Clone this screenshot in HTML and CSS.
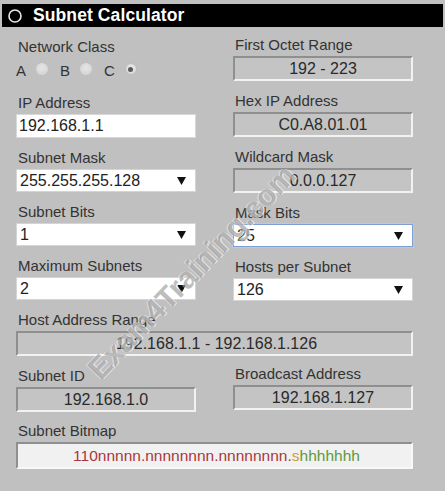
FILE: index.html
```html
<!DOCTYPE html>
<html>
<head>
<meta charset="utf-8">
<link rel="stylesheet" href="styles.css">
</head>
<body>
<div class="app">
  <header class="titlebar">
    <svg class="ring" width="16" height="16" viewBox="0 0 16 16"><circle cx="8" cy="8" r="6" fill="none" stroke="#e8e8e8" stroke-width="1.6"/></svg>
    <h1>Subnet Calculator</h1>
  </header>

  <div class="cols top">
    <div class="col left">
      <div class="field">
        <div class="label">Network Class</div>
        <div class="radios">
          <span class="rlabel">A</span><span class="radio"></span>
          <span class="rlabel">B</span><span class="radio"></span>
          <span class="rlabel">C</span><span class="radio checked"></span>
        </div>
      </div>
      <div class="field ip">
        <div class="label">IP Address</div>
        <div class="input">192.168.1.1</div>
      </div>
      <div class="field">
        <div class="label">Subnet Mask</div>
        <div class="select"><span>255.255.255.128</span><svg width="9" height="8" viewBox="0 0 9 8"><path d="M0 0H9L4.5 8Z" fill="#111"/></svg></div>
      </div>
      <div class="field">
        <div class="label">Subnet Bits</div>
        <div class="select"><span>1</span><svg width="9" height="8" viewBox="0 0 9 8"><path d="M0 0H9L4.5 8Z" fill="#111"/></svg></div>
      </div>
      <div class="field">
        <div class="label">Maximum Subnets</div>
        <div class="select"><span>2</span><svg width="9" height="8" viewBox="0 0 9 8"><path d="M0 0H9L4.5 8Z" fill="#111"/></svg></div>
      </div>
    </div>

    <div class="col right">
      <div class="field">
        <div class="label">First Octet Range</div>
        <div class="out">192 - 223</div>
      </div>
      <div class="field">
        <div class="label">Hex IP Address</div>
        <div class="out">C0.A8.01.01</div>
      </div>
      <div class="field">
        <div class="label">Wildcard Mask</div>
        <div class="out">0.0.0.127</div>
      </div>
      <div class="field">
        <div class="label">Mask Bits</div>
        <div class="select focus"><span>25</span><svg width="9" height="8" viewBox="0 0 9 8"><path d="M0 0H9L4.5 8Z" fill="#111"/></svg></div>
      </div>
      <div class="field">
        <div class="label">Hosts per Subnet</div>
        <div class="select"><span>126</span><svg width="9" height="8" viewBox="0 0 9 8"><path d="M0 0H9L4.5 8Z" fill="#111"/></svg></div>
      </div>
    </div>
  </div>

  <div class="field wide range">
    <div class="label">Host Address Range</div>
    <div class="out">192.168.1.1 - 192.168.1.126</div>
  </div>

  <div class="cols mid">
    <div class="field">
      <div class="label">Subnet ID</div>
      <div class="out">192.168.1.0</div>
    </div>
    <div class="field bcast">
      <div class="label">Broadcast Address</div>
      <div class="out">192.168.1.127</div>
    </div>
  </div>

  <div class="field wide bitmap-field">
    <div class="label">Subnet Bitmap</div>
    <div class="bitmap"><span class="net">110nnnnn.nnnnnnnn.nnnnnnnn.</span><span class="sub">s</span><span class="host">hhhhhhh</span></div>
  </div>

  <div class="watermark">Exam4Training.com</div>
</div>
</body>
</html>
```

FILE: styles.css
```css
* { box-sizing: border-box; }

html, body {
  margin: 0;
  padding: 0;
  background: #c0c0c0;
}

body {
  font-family: "Liberation Sans", Arial, sans-serif;
  color: #333;
  width: 445px;
  height: 491px;
  overflow: hidden;
}

.app {
  position: relative;
  height: 491px;
}

.titlebar {
  margin: 4px 2px 0 2px;
  height: 23px;
  background: #000;
  display: flex;
  align-items: center;
  padding-left: 5px;
}

.ring { display: block; }

.titlebar h1 {
  margin: 0 0 0 10px;
  font-size: 17.5px;
  font-weight: bold;
  color: #fff;
  line-height: 23px;
  letter-spacing: 0.1px;
}

.cols {
  display: grid;
  grid-template-columns: 180px 180px;
  column-gap: 37px;
  padding-left: 16px;
  align-items: start;
}

.col {
  display: flex;
  flex-direction: column;
}

.col.left { padding-top: 12px; gap: 12px; }
.col.right { padding-top: 10px; gap: 12px; }

.field {
  display: flex;
  flex-direction: column;
}

.field.ip { margin-top: 5px; }

.label {
  font-size: 15px;
  line-height: 16px;
  color: #333;
  padding-left: 2px;
  margin-bottom: 3px;
  white-space: nowrap;
}

.radios {
  display: flex;
  align-items: center;
  height: 18px;
  margin-top: 2px;
  font-size: 15px;
  color: #333;
}

.rlabel { line-height: 18px; margin-top: 3px; }

.radio {
  width: 12px;
  height: 12px;
  border-radius: 50%;
  background: radial-gradient(circle at 50% 40%, #e6e6e6 0, #d6d6d6 70%, #cdcdcd 100%);
  margin: 0 12px 0 10px;
  position: relative;
}

.radio.checked {
  background: radial-gradient(circle at 50% 40%, #ececec 0, #d8d8d8 80%, #c8c8c8 100%);
  border: 1px solid #bdbdbd;
}

.radio.checked::after {
  content: "";
  position: absolute;
  left: 2.5px;
  top: 2.5px;
  width: 5px;
  height: 5px;
  border-radius: 50%;
  background: #5a5a5a;
}

.input {
  height: 24px;
  background: #fff;
  border: 1px solid #d8d8d8;
  font-size: 16px;
  line-height: 22px;
  padding-left: 2px;
  color: #222;
}

.select {
  height: 23px;
  background: #fff;
  border: 1px solid #d4d4d4;
  font-size: 16px;
  line-height: 21px;
  padding: 0 9px 0 3px;
  color: #222;
  display: flex;
  align-items: center;
  justify-content: space-between;
}

.select.focus {
  border: 1px solid #7e9ed6;
  box-shadow: 0 0 0 1px #b7c9ea;
}

.out {
  height: 25px;
  background: #c4c4c4;
  border-style: solid;
  border-width: 2px;
  border-color: #8f8f8f #f2f2f2 #f2f2f2 #8f8f8f;
  font-size: 16px;
  line-height: 21px;
  text-align: center;
  color: #2a2a2a;
}

.wide {
  padding-left: 16px;
  width: 413px;
}

.range { margin-top: 11px; }

.range .out { padding-left: 4px; }

.cols.mid { margin-top: 12px; }

.bcast { margin-top: -2px; }

.bitmap-field { margin-top: 11px; }

.bitmap {
  height: 27px;
  background: #f1f1f1;
  border-style: solid;
  border-width: 2px;
  border-color: #8f8f8f #f8f8f8 #f8f8f8 #8f8f8f;
  font-size: 15.5px;
  line-height: 23px;
  text-align: center;
  padding-left: 4px;
}

.net { color: #a8383a; }
.sub { color: #c9a13c; }
.host { color: #5f9a3c; }

.watermark {
  position: absolute;
  left: 192px;
  top: 268px;
  transform: translate(-50%, -50%) rotate(-46deg);
  font-size: 30px;
  font-weight: bold;
  white-space: nowrap;
  color: rgba(125, 125, 125, 0.5);
  text-shadow: 1px 1px 0 rgba(255, 255, 255, 0.6), -1px -1px 0 rgba(255, 255, 255, 0.4);
  pointer-events: none;
}
```
